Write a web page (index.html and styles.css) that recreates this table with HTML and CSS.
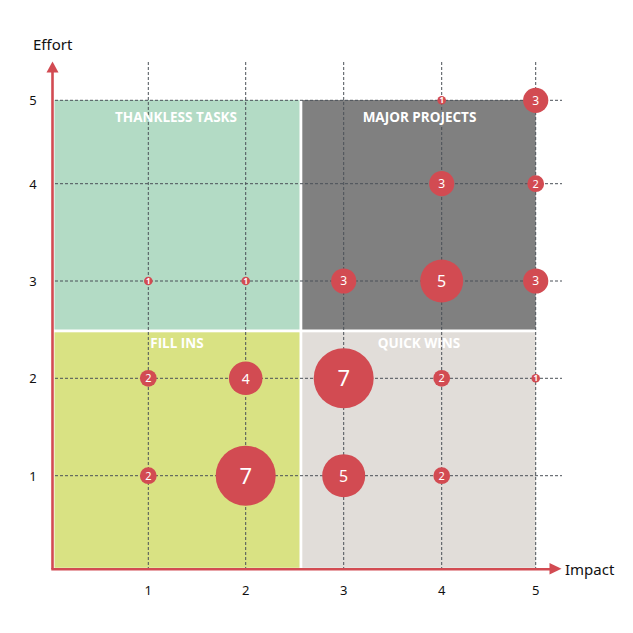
FILE: index.html
```html
<!DOCTYPE html>
<html>
<head>
<meta charset="utf-8">
<link rel="stylesheet" href="styles.css">
</head>
<body>
<svg class="chart" width="633" height="633" viewBox="0 0 633 633" xmlns="http://www.w3.org/2000/svg">
  <rect class="q-green" x="54.5" y="100" width="245" height="229.5"/>
  <rect class="q-gray" x="302.3" y="100" width="233.4" height="229.5"/>
  <rect class="q-yellow" x="54.5" y="332.3" width="245" height="235.5"/>
  <rect class="q-light" x="302.3" y="332.3" width="233.4" height="235.5"/>

  <g class="grid">
    <line x1="148.3" y1="62" x2="148.3" y2="568"/>
    <line x1="245.7" y1="62" x2="245.7" y2="568"/>
    <line x1="343.7" y1="62" x2="343.7" y2="568"/>
    <line x1="441.7" y1="62" x2="441.7" y2="568"/>
    <line x1="535.7" y1="62" x2="535.7" y2="568"/>
    <line x1="55" y1="100.3" x2="562" y2="100.3"/>
    <line x1="55" y1="183.7" x2="562" y2="183.7"/>
    <line x1="55" y1="281" x2="562" y2="281"/>
    <line x1="55" y1="378.3" x2="562" y2="378.3"/>
    <line x1="55" y1="475.7" x2="562" y2="475.7"/>
  </g>

  <g class="qlabel">
    <text x="176" y="121.7">THANKLESS TASKS</text>
    <text x="419.5" y="121.7">MAJOR PROJECTS</text>
    <text x="177" y="347.7">FILL INS</text>
    <text x="419" y="347.7">QUICK WINS</text>
  </g>

  <g class="axis">
    <line x1="52.5" y1="70" x2="52.5" y2="569.3"/>
    <line x1="51.3" y1="569.3" x2="551" y2="569.3"/>
    <polygon points="52.5,61.5 46.5,72.5 58.5,72.5"/>
    <polygon points="561.5,568.8 549.5,563 549.5,574.6"/>
  </g>

  <g class="ticks">
    <text x="33" y="105">5</text>
    <text x="33" y="188.5">4</text>
    <text x="33" y="286">3</text>
    <text x="33" y="383">2</text>
    <text x="33" y="480.5">1</text>
    <text x="148.3" y="595">1</text>
    <text x="245.7" y="595">2</text>
    <text x="343.7" y="595">3</text>
    <text x="441.7" y="595">4</text>
    <text x="535.7" y="595">5</text>
  </g>
  <text class="title" x="33" y="50">Effort</text>
  <text class="title" x="565" y="574.5">Impact</text>

  <g class="bubbles">
    <circle cx="441.7" cy="100.3" r="4.3"/><text class="v1" x="441.7" y="103">1</text>
    <circle cx="535.7" cy="100.3" r="12.6"/><text class="v3" x="535.7" y="104.6">3</text>
    <circle cx="441.7" cy="183.7" r="12.6"/><text class="v3" x="441.7" y="188">3</text>
    <circle cx="535.7" cy="183.7" r="8.4"/><text class="v2" x="535.7" y="187.7">2</text>
    <circle cx="148.3" cy="281" r="4.3"/><text class="v1" x="148.3" y="283.8">1</text>
    <circle cx="245.7" cy="281" r="4.3"/><text class="v1" x="245.7" y="283.8">1</text>
    <circle cx="343.7" cy="281" r="12.6"/><text class="v3" x="343.7" y="285.3">3</text>
    <circle cx="441.7" cy="281" r="21.5"/><text class="v5" x="441.7" y="286.8">5</text>
    <circle cx="535.7" cy="281" r="12.6"/><text class="v3" x="535.7" y="285.3">3</text>
    <circle cx="148.3" cy="378.3" r="8.4"/><text class="v2" x="148.3" y="382.3">2</text>
    <circle cx="245.7" cy="378.3" r="16.8"/><text class="v4" x="245.7" y="383.5">4</text>
    <circle cx="343.7" cy="378.3" r="30"/><text class="v7" x="343.7" y="386.3">7</text>
    <circle cx="441.7" cy="378.3" r="8.4"/><text class="v2" x="441.7" y="382.3">2</text>
    <circle cx="535.7" cy="378.3" r="4.3"/><text class="v1" x="535.7" y="381.1">1</text>
    <circle cx="148.3" cy="475.7" r="8.4"/><text class="v2" x="148.3" y="479.7">2</text>
    <circle cx="245.7" cy="475.7" r="30"/><text class="v7" x="245.7" y="483.7">7</text>
    <circle cx="343.7" cy="475.7" r="21.5"/><text class="v5" x="343.7" y="481.5">5</text>
    <circle cx="441.7" cy="475.7" r="8.4"/><text class="v2" x="441.7" y="479.7">2</text>
  </g>
</svg>
</body>
</html>
```

FILE: styles.css
```css
html, body {
  margin: 0;
  padding: 0;
  background: #ffffff;
}

.chart {
  display: block;
  font-family: "Noto Sans", "DejaVu Sans", sans-serif;
}

.q-green { fill: #b3dbc5; }
.q-gray { fill: #808080; }
.q-yellow { fill: #d9e283; }
.q-light { fill: #e1ddd9; }

.grid line {
  stroke: #4a5058;
  stroke-width: 1;
  stroke-dasharray: 3 2;
}

.qlabel text {
  fill: #ffffff;
  font-family: "Open Sans", "Noto Sans", sans-serif;
  font-weight: 700;
  font-size: 13.5px;
  letter-spacing: 0;
  text-anchor: middle;
}

.axis line {
  stroke: #d24b52;
  stroke-width: 2.6;
}

.axis polygon {
  fill: #d24b52;
}

.ticks text {
  fill: #111111;
  font-size: 13px;
  text-anchor: middle;
}

.title {
  fill: #111111;
  font-size: 15px;
}

.bubbles circle {
  fill: #d24b52;
}

.bubbles text {
  fill: #ffffff;
  text-anchor: middle;
}

.v1 { font-size: 8px; font-weight: 700; }
.v2 { font-size: 11px; }
.v3 { font-size: 12px; }
.v4 { font-size: 14px; }
.v5 { font-size: 16px; }
.v7 { font-size: 22px; }
```
